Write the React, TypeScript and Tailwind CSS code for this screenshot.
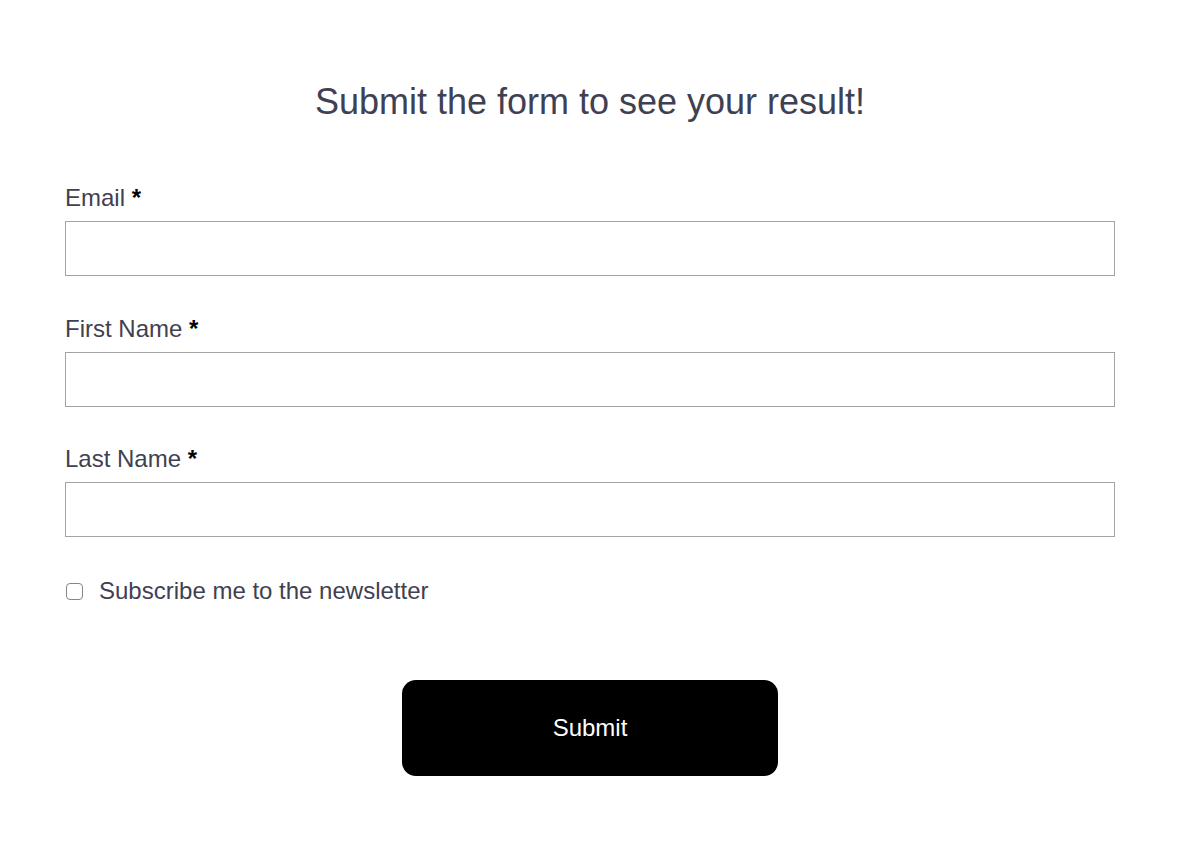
import React from "react";

function Field({ label }: { label: string }) {
  return (
    <div className="flex flex-col">
      <label className="text-[24px] leading-[28px] text-[#3f4152]">
        {label} <span className="font-bold text-black">*</span>
      </label>
      <input
        type="text"
        className="mt-[9px] h-[55px] w-full border border-[#a3a3a3] bg-white outline-none"
      />
    </div>
  );
}

export default function App() {
  return (
    <div
      className="min-h-[842px] w-full bg-white"
      style={{ fontFamily: '"Liberation Sans", Arial, Helvetica, sans-serif' }}
    >
      <div className="ml-[65px] w-[1050px] pt-[80px]">
        <h1 className="text-center text-[36px] leading-[44px] text-[#3f4152]">
          Submit the form to see your result!
        </h1>
        <form className="mt-[60px] flex flex-col gap-[38.5px]">
          <Field label="Email" />
          <Field label="First Name" />
          <Field label="Last Name" />
        </form>
        <div className="mt-[40px] flex items-center">
          <span className="ml-[1px] h-[17px] w-[17px] rounded-[4px] border border-[#858585] bg-white" />
          <span className="ml-[16px] text-[24px] leading-[28px] text-[#3f4152]">
            Subscribe me to the newsletter
          </span>
        </div>
        <div className="mt-[75px] flex justify-center">
          <button className="h-[96px] w-[376px] rounded-[14px] bg-black text-[24px] text-white">
            Submit
          </button>
        </div>
      </div>
    </div>
  );
}
